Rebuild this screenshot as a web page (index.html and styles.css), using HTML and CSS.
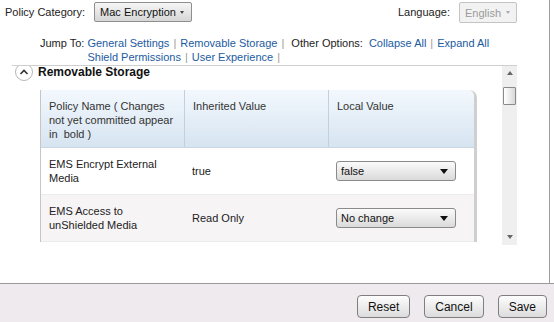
FILE: index.html
```html
<!DOCTYPE html>
<html lang="en">
<head>
    <meta charset="UTF-8">
    <title>Policy Editor</title>
    <link rel="stylesheet" href="styles.css">
</head>
<body>

    <div class="page">
        <div class="topbar">
            <div class="field">
                <span class="label">Policy Category:</span>
                <div class="combo">Mac Encryption <span class="tri small"></span></div>
            </div>
            <div class="field">
                <span class="label">Language:</span>
                <div class="combo disabled">English <span class="tri small"></span></div>
            </div>
        </div>

        <div class="nav">
            <div class="nav-group">
                <span class="nav-label">Jump To:</span>
                <div class="nav-links">
                    <div><a href="#">General Settings</a><span class="sep">|</span><a href="#">Removable Storage</a><span class="sep">|</span></div>
                    <div><a href="#">Shield Permissions</a><span class="sep">|</span><a href="#">User Experience</a><span class="sep">|</span></div>
                </div>
            </div>
            <div class="nav-group other">
                <span class="nav-label">Other Options:</span>
                <div class="nav-links">
                    <div><a href="#">Collapse All</a><span class="sep">|</span><a href="#">Expand All</a></div>
                </div>
            </div>
        </div>

        <div class="panel">
            <div class="panel-body">
                <div class="section-head">
                    <span class="toggle">
                        <svg width="10" height="6" viewBox="0 0 10 6"><path d="M1.5 5 L5 1.5 L8.5 5" fill="none" stroke="#333" stroke-width="1.6"/></svg>
                    </span>
                    <span class="section-title">Removable Storage</span>
                </div>

                <div class="grid">
                    <div class="grid-row head">
                        <div class="cell">Policy Name ( Changes not yet committed appear in&nbsp; bold )</div>
                        <div class="cell">Inherited Value</div>
                        <div class="cell">Local Value</div>
                    </div>
                    <div class="grid-row">
                        <div class="cell">EMS Encrypt External Media</div>
                        <div class="cell mid">true</div>
                        <div class="cell mid"><div class="select">false <span class="tri"></span></div></div>
                    </div>
                    <div class="grid-row alt">
                        <div class="cell">EMS Access to unShielded Media</div>
                        <div class="cell mid">Read Only</div>
                        <div class="cell mid"><div class="select">No change <span class="tri"></span></div></div>
                    </div>
                </div>
            </div>

            <div class="scrollbar">
                <span class="arrow up"></span>
                <span class="thumb"></span>
                <span class="arrow down"></span>
            </div>
        </div>
    </div>

    <div class="footer">
        <button class="btn">Reset</button>
        <button class="btn">Cancel</button>
        <button class="btn">Save</button>
    </div>

</body>
</html>
```

FILE: styles.css
```css
body {
    margin: 0;
    font-family: "Liberation Sans", Arial, sans-serif;
    font-size: 11px;
    color: #222;
    background: #fff;
}

/* Main white area with the right edge line */
.page {
    width: 549px;
    height: 283px;
    border-right: 1px solid #9c9c9c;
}

.topbar {
    display: flex;
    justify-content: space-between;
    padding: 1px 32px 0 5px;
}

.field {
    display: flex;
    align-items: center;
}

.field .label { margin-right: 9px; }

.combo {
    display: flex;
    align-items: center;
    justify-content: space-between;
    box-sizing: border-box;
    width: 98px;
    height: 20px;
    padding: 0 7px 0 5px;
    border: 1px solid #8e8e8e;
    border-radius: 2px;
    background: linear-gradient(#f6f6f6, #d6d6d6);
    color: #111;
    white-space: nowrap;
}

.combo.disabled {
    width: 58px;
    height: 21px;
    margin-top: 1px;
    padding: 0 6px 0 5px;
    border-color: #c4c4c4;
    background: #f2f2f2;
    color: #9a9a9a;
}

.tri {
    width: 0;
    height: 0;
    border-left: 4px solid transparent;
    border-right: 4px solid transparent;
    border-top: 5px solid #111;
}
.tri.small {
    border-left-width: 2.5px;
    border-right-width: 2.5px;
    border-top-width: 3px;
    border-top-color: #444;
}
.combo.disabled .tri { border-top-color: #aaa; }

/* Jump links */
.nav {
    display: flex;
    padding: 13px 0 0 40px;
    line-height: 14px;
}

.nav-group { display: flex; }
.nav-group.other { margin-left: 3px; }
.nav-label { margin-right: 3px; }
.other .nav-label { margin-right: 6px; }

.nav a {
    color: #1c5b9f;
    text-decoration: none;
}

.sep {
    color: #999;
    margin: 0 4px;
}

/* Scrolling policy panel */
.panel {
    display: flex;
    width: 505px;
    height: 179px;
    margin: 1px 0 0 12px;
    border-top: 1px solid #cfcfcf;
}

.panel-body {
    flex: 1;
    overflow: hidden;
}

.section-head {
    display: flex;
    align-items: center;
    margin: -3px 0 0 3px;
}

.toggle {
    display: flex;
    align-items: center;
    justify-content: center;
    box-sizing: border-box;
    width: 18px;
    height: 18px;
    border: 1px solid #b8b8b8;
    border-radius: 50%;
    background: #fff;
}

.section-title {
    margin-left: 5px;
    font-size: 12px;
    font-weight: bold;
    color: #111;
}

.grid {
    width: 433px;
    margin: 9px 0 0 28px;
    border-left: 1px solid #c6c6c6;
    border-right: 3px solid #cfcfcf;
    border-top-right-radius: 8px;
}

.grid-row {
    display: grid;
    grid-template-columns: 143px 144px 1fr;
    height: 46px;
    border-bottom: 1px solid #ececec;
}

.grid-row.head {
    height: 57px;
    border-top-right-radius: 6px;
    border-bottom: 1px solid #c9d6e3;
    background: linear-gradient(#f3f8fd, #d6e4f1);
}

.grid-row.alt { background: #f7f4f6; }

.cell {
    padding: 9px 8px 0 8px;
    line-height: 14px;
}

.head .cell {
    padding-top: 9px;
    color: #333;
}
.head .cell + .cell { border-left: 1px solid #c2d0dd; }

.cell.mid {
    display: flex;
    align-items: center;
    padding-top: 0;
}

.select {
    display: flex;
    align-items: center;
    justify-content: space-between;
    box-sizing: border-box;
    width: 120px;
    height: 20px;
    padding: 0 7px 0 4px;
    border: 1px solid #8a8a8a;
    border-radius: 3px;
    background: linear-gradient(#fbfbfb, #dadada);
    color: #111;
}

/* Drawn scrollbar */
.scrollbar {
    position: relative;
    width: 15px;
    background: #efefef;
}

.thumb {
    position: absolute;
    top: 21px;
    left: 1px;
    box-sizing: border-box;
    width: 13px;
    height: 18px;
    border: 1px solid #8a8a8a;
    border-radius: 1px;
    background: linear-gradient(90deg, #fff, #d8d8d8);
}

.arrow {
    position: absolute;
    left: 5px;
    width: 0;
    height: 0;
    border-left: 3px solid transparent;
    border-right: 3px solid transparent;
}
.arrow.up { top: 5px; border-bottom: 4px solid #666; }
.arrow.down { bottom: 6px; border-top: 4px solid #666; }

/* Bottom button bar */
.footer {
    display: flex;
    justify-content: flex-end;
    gap: 14px;
    height: 39px;
    padding: 11px 7px 0 0;
    box-sizing: border-box;
    border-top: 1px solid #9a9a9a;
    background: #eeeaee;
}

.btn {
    height: 23px;
    padding: 0 10px;
    font-family: "Liberation Sans", Arial, sans-serif;
    font-size: 12px;
    color: #111;
    border: 1px solid #7f7f7f;
    border-radius: 4px;
    background: linear-gradient(#fdfdfd, #dcdcdc);
}
```
